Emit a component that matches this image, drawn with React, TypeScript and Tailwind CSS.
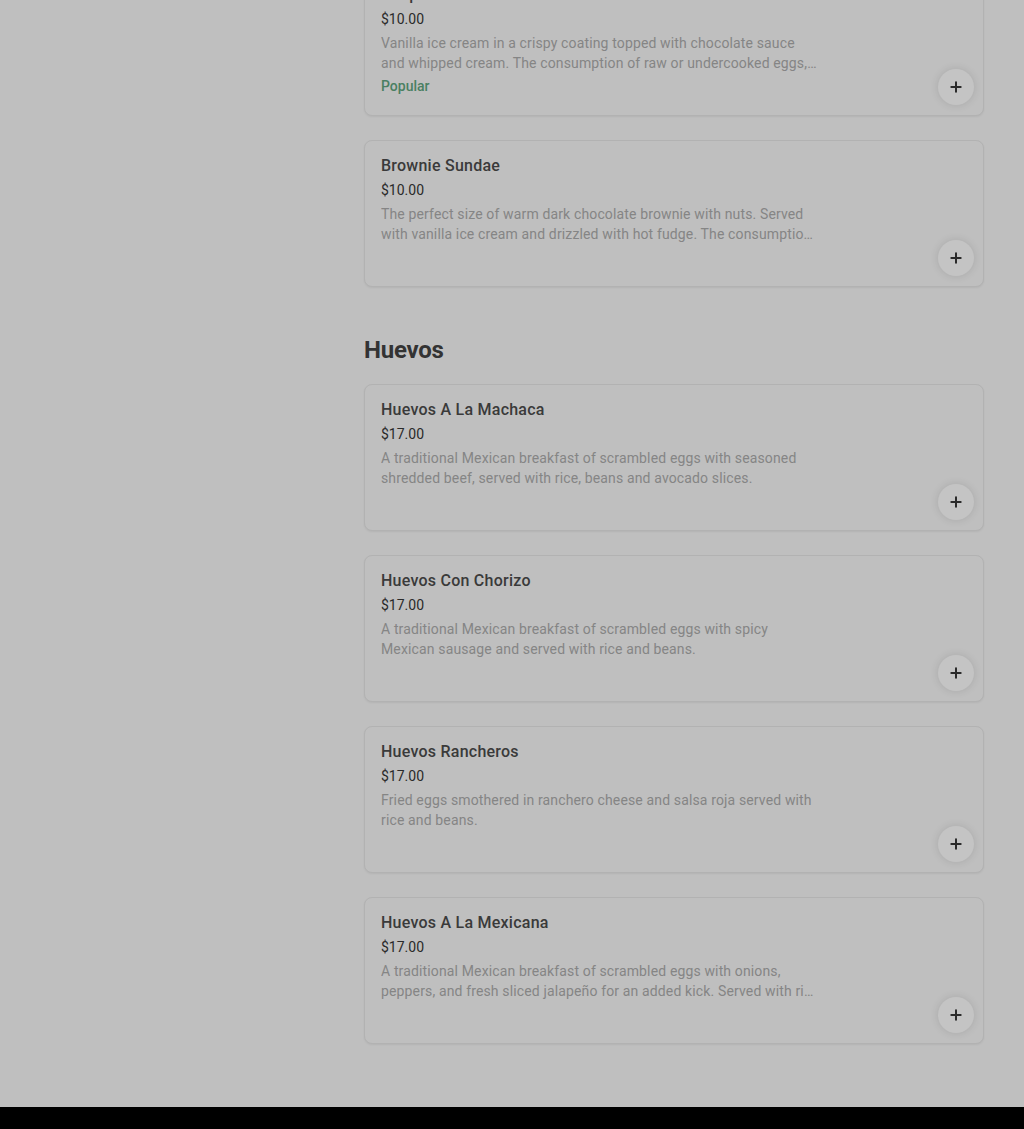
import { Plus } from "lucide-react";

type Item = {
  name: string;
  price: string;
  desc: string;
  popular?: boolean;
};

const desserts: Item[] = [
  {
    name: "Deep-Fried Ice Cream",
    price: "$10.00",
    desc: "Vanilla ice cream in a crispy coating topped with chocolate sauce and whipped cream. The consumption of raw or undercooked eggs, meat, poultry, seafood or shellfish may increase your risk of foodborne illness.",
    popular: true,
  },
  {
    name: "Brownie Sundae",
    price: "$10.00",
    desc: "The perfect size of warm dark chocolate brownie with nuts. Served with vanilla ice cream and drizzled with hot fudge. The consumption of raw or undercooked eggs may increase your risk of foodborne illness.",
  },
];

const huevos: Item[] = [
  {
    name: "Huevos A La Machaca",
    price: "$17.00",
    desc: "A traditional Mexican breakfast of scrambled eggs with seasoned shredded beef, served with rice, beans and avocado slices.",
  },
  {
    name: "Huevos Con Chorizo",
    price: "$17.00",
    desc: "A traditional Mexican breakfast of scrambled eggs with spicy Mexican sausage and served with rice and beans.",
  },
  {
    name: "Huevos Rancheros",
    price: "$17.00",
    desc: "Fried eggs smothered in ranchero cheese and salsa roja served with rice and beans.",
  },
  {
    name: "Huevos A La Mexicana",
    price: "$17.00",
    desc: "A traditional Mexican breakfast of scrambled eggs with onions, peppers, and fresh sliced jalapeño for an added kick. Served with rice and beans.",
  },
];

function MenuCard({ item }: { item: Item }) {
  return (
    <div className="relative h-[147px] rounded-lg border border-[#b2b2b2] bg-[#bfbfbf] shadow-[0_1px_2px_rgba(0,0,0,0.06)] px-4 pt-[15px]">
      <div className="text-[16px] leading-[20px] font-medium tracking-[0.015em] text-[#3a3a3a]">{item.name}</div>
      <div className="mt-[4px] text-[14px] leading-[20px] text-[#2a2a2a]">{item.price}</div>
      <p className="mt-[4px] w-[438px] text-[14px] leading-[20px] tracking-[0.01em] text-[#858585] line-clamp-2">
        {item.desc}
      </p>
      {item.popular && (
        <div className="mt-[2px] pt-px text-[14px] leading-[20px] font-medium text-[#4a7f62]">Popular</div>
      )}
      <button className="absolute right-[9px] bottom-[10px] flex h-9 w-9 items-center justify-center rounded-full bg-[#c4c4c4] shadow-[0_0_8px_rgba(0,0,0,0.12)]">
        <Plus className="h-4 w-4 text-[#2a2a2a]" strokeWidth={3} />
      </button>
    </div>
  );
}

export default function App() {
  return (
    <div
      className="min-h-[1129px] bg-[#bfbfbf] flex flex-col"
      style={{ fontFamily: "Roboto, 'Noto Sans', sans-serif" }}
    >
      <div className="flex flex-1">
        <aside className="w-[364px] shrink-0" />
        <main className="w-[620px] -mt-[31px] pb-[63px]">
          <section className="flex flex-col gap-6">
            {desserts.map((it) => (
              <MenuCard key={it.name} item={it} />
            ))}
          </section>
          <h2 className="mt-[48px] mb-[19px] text-[24px] leading-[30px] font-bold tracking-[-0.01em] text-[#333333]">
            Huevos
          </h2>
          <section className="flex flex-col gap-6">
            {huevos.map((it) => (
              <MenuCard key={it.name} item={it} />
            ))}
          </section>
        </main>
      </div>
      <footer className="h-[22px] bg-black" />
    </div>
  );
}
